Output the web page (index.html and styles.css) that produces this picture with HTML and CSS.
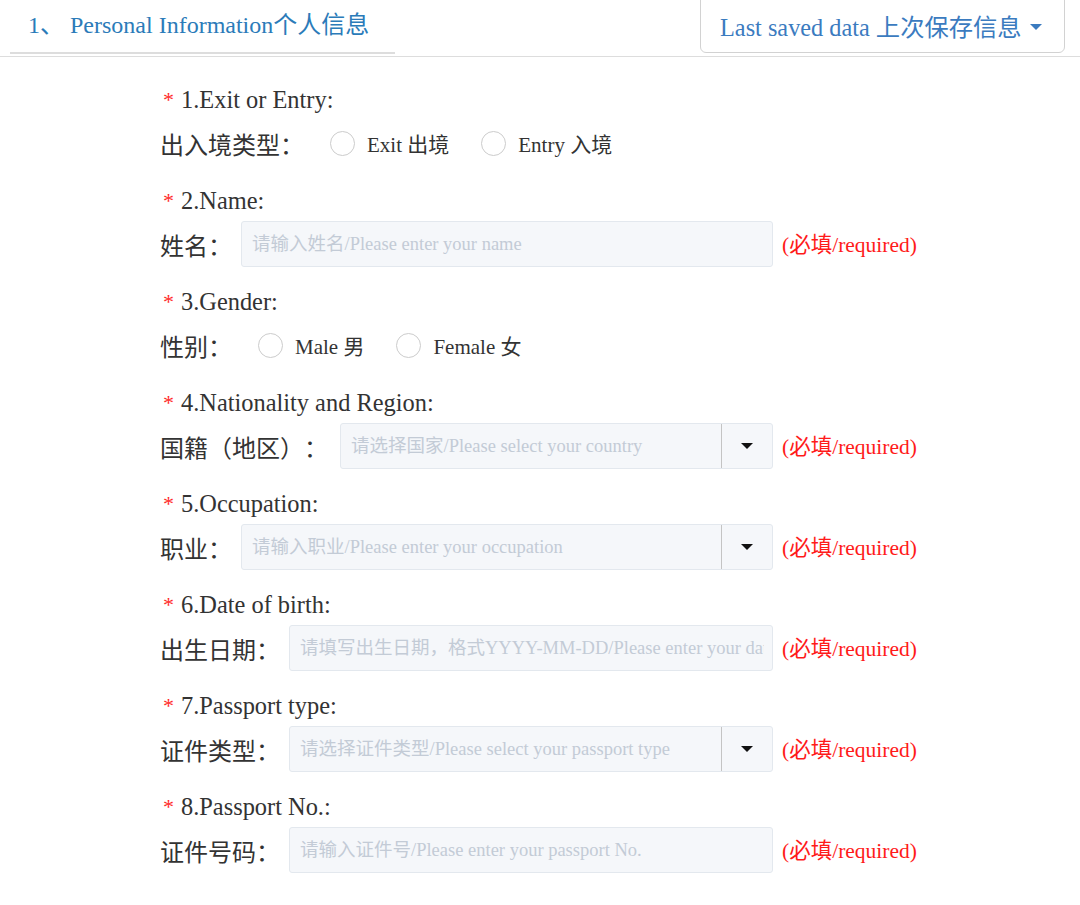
FILE: index.html
```html
<!DOCTYPE html>
<html lang="zh">
<head>
<meta charset="utf-8">
<title>Personal Information</title>
<link rel="stylesheet" href="styles.css">
</head>
<body>
<div class="header">
  <div class="tab">1、 Personal Information个人信息</div>
  <button class="saved" type="button">Last saved data 上次保存信息<span class="btn-caret"></span></button>
</div>

<form class="form">
  <div class="item">
    <div class="q"><span class="star">*</span>1.Exit or Entry:</div>
    <div class="a">
      <span class="lbl">出入境类型：</span>
      <div class="radios">
        <label class="radio"><span class="circle"></span>Exit 出境</label>
        <label class="radio"><span class="circle"></span>Entry 入境</label>
      </div>
    </div>
  </div>

  <div class="item">
    <div class="q"><span class="star">*</span>2.Name:</div>
    <div class="a">
      <div class="field">
        <span class="lbl">姓名：</span>
        <input class="input" type="text" placeholder="请输入姓名/Please enter your name">
      </div>
      <span class="req">(必填/required)</span>
    </div>
  </div>

  <div class="item">
    <div class="q"><span class="star">*</span>3.Gender:</div>
    <div class="a">
      <span class="lbl">性别：</span>
      <div class="radios">
        <label class="radio"><span class="circle"></span>Male 男</label>
        <label class="radio"><span class="circle"></span>Female 女</label>
      </div>
    </div>
  </div>

  <div class="item">
    <div class="q"><span class="star">*</span>4.Nationality and Region:</div>
    <div class="a">
      <div class="field">
        <span class="lbl lbl-wide">国籍（地区）：</span>
        <div class="select">
          <span class="select-text">请选择国家/Please select your country</span>
          <span class="select-btn"><span class="caret"></span></span>
        </div>
      </div>
      <span class="req">(必填/required)</span>
    </div>
  </div>

  <div class="item">
    <div class="q"><span class="star">*</span>5.Occupation:</div>
    <div class="a">
      <div class="field">
        <span class="lbl">职业：</span>
        <div class="select">
          <span class="select-text">请输入职业/Please enter your occupation</span>
          <span class="select-btn"><span class="caret"></span></span>
        </div>
      </div>
      <span class="req">(必填/required)</span>
    </div>
  </div>

  <div class="item">
    <div class="q"><span class="star">*</span>6.Date of birth:</div>
    <div class="a">
      <div class="field">
        <span class="lbl">出生日期：</span>
        <input class="input" type="text" placeholder="请填写出生日期，格式YYYY-MM-DD/Please enter your date of birth">
      </div>
      <span class="req">(必填/required)</span>
    </div>
  </div>

  <div class="item">
    <div class="q"><span class="star">*</span>7.Passport type:</div>
    <div class="a">
      <div class="field">
        <span class="lbl">证件类型：</span>
        <div class="select">
          <span class="select-text">请选择证件类型/Please select your passport type</span>
          <span class="select-btn"><span class="caret"></span></span>
        </div>
      </div>
      <span class="req">(必填/required)</span>
    </div>
  </div>

  <div class="item">
    <div class="q"><span class="star">*</span>8.Passport No.:</div>
    <div class="a">
      <div class="field">
        <span class="lbl">证件号码：</span>
        <input class="input" type="text" placeholder="请输入证件号/Please enter your passport No.">
      </div>
      <span class="req">(必填/required)</span>
    </div>
  </div>
</form>
</body>
</html>
```

FILE: styles.css
```css
* { box-sizing: border-box; }

html, body {
  margin: 0;
  padding: 0;
  background: #ffffff;
}

body {
  font-family: "Liberation Serif", "Noto Sans CJK SC", serif;
  color: #333333;
  overflow: hidden;
  text-spacing-trim: space-all;
}

.header {
  display: flex;
  justify-content: space-between;
  align-items: flex-end;
  height: 57px;
  padding-bottom: 2px;
  border-bottom: 1px solid #dddddd;
}

.tab {
  margin-left: 10px;
  width: 385px;
  height: 54px;
  padding-left: 18px;
  border-bottom: 2px solid #dddddd;
  font-size: 24px;
  line-height: 50px;
  color: #2b7bb9;
  white-space: nowrap;
}

.saved {
  margin-right: 15px;
  margin-bottom: 1px;
  width: 365px;
  height: 60px;
  padding: 5px 0 0 19px;
  text-align: left;
  background: #ffffff;
  border: 1px solid #d2d2d2;
  border-radius: 6px;
  font-family: "Liberation Serif", "Noto Sans CJK SC", serif;
  font-size: 24.3px;
  color: #3b7bbf;
  white-space: nowrap;
  display: flex;
  align-items: center;
}

.btn-caret {
  display: inline-block;
  margin-left: 8px;
  margin-top: 3px;
  width: 0;
  height: 0;
  border-top: 6px solid #3b7bbf;
  border-left: 6px solid transparent;
  border-right: 6px solid transparent;
}

.form {
  padding: 26px 0 0 160px;
}

.item {
  margin-bottom: 18px;
}

.q {
  height: 34px;
  line-height: 34px;
  font-size: 24.4px;
  padding-left: 3px;
  color: #333333;
  white-space: nowrap;
}

.star {
  color: #ff2a2a;
  font-size: 22px;
  margin-right: 7px;
  vertical-align: 1px;
}

.a {
  margin-top: 3px;
  height: 46px;
  display: flex;
  align-items: center;
}

.field {
  width: 613px;
  display: flex;
  align-items: center;
}

.lbl {
  font-size: 24px;
  white-space: nowrap;
  color: #333333;
  margin-right: 9px;
}

.lbl-wide {
  margin-right: 12px;
}

.input,
.select {
  flex: 1;
  min-width: 0;
  height: 46px;
  background: #f5f7fa;
  border: 1px solid #e3e8ee;
  border-radius: 3px;
  font-family: "Liberation Serif", "Noto Sans CJK SC", serif;
  font-size: 18.5px;
  color: #333333;
}

.input {
  padding: 0 8px 0 10px;
  outline: none;
}

.input::placeholder,
.select-text {
  color: #c3cbd6;
  opacity: 1;
}

.select {
  display: flex;
  align-items: stretch;
}

.select-text {
  flex: 1;
  min-width: 0;
  padding-left: 10px;
  line-height: 44px;
  white-space: nowrap;
  overflow: hidden;
}

.select-btn {
  width: 51px;
  border-left: 1px solid #c4c4c4;
  display: flex;
  align-items: center;
  justify-content: center;
}

.caret {
  width: 0;
  height: 0;
  border-top: 6px solid #111111;
  border-left: 6px solid transparent;
  border-right: 6px solid transparent;
}

.req {
  margin-left: 9px;
  margin-bottom: 4px;
  font-size: 21.5px;
  color: #ff1a1a;
  white-space: nowrap;
}

.radios {
  display: flex;
  align-items: center;
  gap: 32px;
  margin-left: 17px;
}

.radio {
  display: flex;
  align-items: center;
  gap: 12px;
  font-size: 21px;
  color: #333333;
  white-space: nowrap;
}

.circle {
  width: 25px;
  height: 25px;
  border: 1.5px solid #cccccc;
  border-radius: 50%;
  background: #ffffff;
}
```
